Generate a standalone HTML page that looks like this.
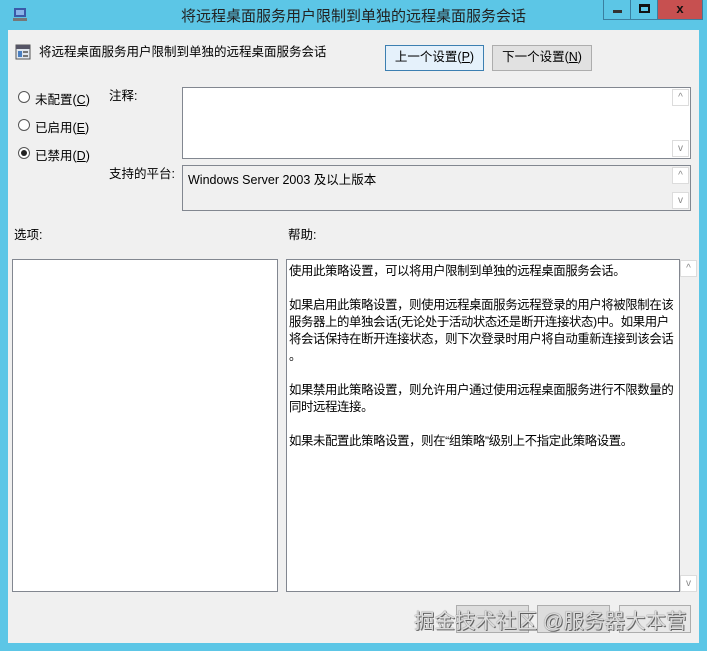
<!DOCTYPE html>
<html><head><meta charset="utf-8"><style>
*{margin:0;padding:0;box-sizing:border-box}
body{width:707px;height:651px;background:#5cc6e6;position:relative;overflow:hidden;font-family:"Liberation Sans","Noto Sans CJK SC",sans-serif;font-size:12.5px;color:#000}
.a{position:absolute}
.panel{left:8px;top:30px;width:691px;height:613px;background:#f0f0f0}
.btn{border:1px solid #adadad;background:#e1e1e1;text-align:center;line-height:23px;font-size:12.5px}
.box{border:1px solid #828790;background:#fff}
.sb{background:#fff;border:1px solid #dcdcdc;width:17px;height:17px;font-size:10px;color:#888;text-align:center;line-height:15px}
.radio{width:12px;height:12px;border:1px solid #555;border-radius:50%;background:#fff}
.help div{white-space:nowrap;height:17px}
</style></head><body>
<svg class="a" style="left:12px;top:6px" width="16" height="16"><rect x="2" y="2" width="12" height="9" fill="#3b5aa8"/><rect x="4" y="4" width="8" height="5" fill="#8ab4e8"/><rect x="1" y="12" width="14" height="3" fill="#777"/></svg>
<div class="a" style="left:0;top:5px;width:707px;text-align:center;font-size:15px;color:#222">将远程桌面服务用户限制到单独的远程桌面服务会话</div>
<div class="a" style="left:603px;top:0;width:28px;height:20px;border:1px solid #3a7fa0;border-top:none"><div class="a" style="left:9px;top:10px;width:9px;height:3px;background:#333"></div></div>
<div class="a" style="left:630px;top:0;width:28px;height:20px;border:1px solid #3a7fa0;border-top:none"><div class="a" style="left:8px;top:4px;width:11px;height:9px;border:2px solid #111;border-top-width:3px"></div></div>
<div class="a" style="left:657px;top:0;width:46px;height:20px;background:#c75050;border:1px solid #3a7fa0;border-top:none;color:#111;text-align:center;font-weight:bold;font-size:13px;line-height:18px">x</div>
<div class="a panel"></div>
<svg class="a" style="left:15px;top:44px" width="16" height="16"><rect x="1" y="1" width="14" height="14" fill="#dfe6ee" stroke="#555"/><rect x="1" y="1" width="14" height="4" fill="#556"/><rect x="3" y="7" width="4" height="6" fill="#4a7fc0"/><rect x="8" y="7" width="5" height="2" fill="#777"/><rect x="8" y="11" width="5" height="2" fill="#777"/></svg>
<div class="a" style="left:39px;top:41px">将远程桌面服务用户限制到单独的远程桌面服务会话</div>
<div class="a btn" style="left:385px;top:45px;width:99px;height:26px;border-color:#3c7fb1;background:#e5f1fb">上一个设置(<u>P</u>)</div>
<div class="a btn" style="left:492px;top:45px;width:100px;height:26px">下一个设置(<u>N</u>)</div>
<div class="a radio" style="left:18px;top:91px"></div><div class="a" style="left:35px;top:89px">未配置(<u>C</u>)</div>
<div class="a radio" style="left:18px;top:119px"></div><div class="a" style="left:35px;top:117px">已启用(<u>E</u>)</div>
<div class="a radio" style="left:18px;top:147px"><div class="a" style="left:2px;top:2px;width:6px;height:6px;border-radius:50%;background:#222"></div></div><div class="a" style="left:35px;top:145px">已禁用(<u>D</u>)</div>
<div class="a" style="left:109px;top:85px">注释:</div>
<div class="a box" style="left:182px;top:87px;width:509px;height:72px"><div class="a sb" style="right:1px;top:1px">^</div><div class="a sb" style="right:1px;bottom:1px">v</div></div>
<div class="a" style="left:109px;top:163px">支持的平台:</div>
<div class="a box" style="left:182px;top:165px;width:509px;height:46px;background:#f0f0f0"><div class="a" style="left:5px;top:3px">Windows Server 2003 及以上版本</div><div class="a sb" style="right:1px;top:1px">^</div><div class="a sb" style="right:1px;bottom:1px">v</div></div>
<div class="a" style="left:14px;top:224px">选项:</div>
<div class="a" style="left:288px;top:224px">帮助:</div>
<div class="a box" style="left:12px;top:259px;width:266px;height:333px"></div>
<div class="a box help" style="left:286px;top:259px;width:394px;height:333px;padding:1px 2px;font-size:12.4px;letter-spacing:-0.38px;overflow:hidden">
<div>使用此策略设置，可以将用户限制到单独的远程桌面服务会话。</div><div></div>
<div>如果启用此策略设置，则使用远程桌面服务远程登录的用户将被限制在该</div>
<div>服务器上的单独会话(无论处于活动状态还是断开连接状态)中。如果用户</div>
<div>将会话保持在断开连接状态，则下次登录时用户将自动重新连接到该会话</div>
<div>。</div><div></div>
<div>如果禁用此策略设置，则允许用户通过使用远程桌面服务进行不限数量的</div>
<div>同时远程连接。</div><div></div>
<div>如果未配置此策略设置，则在“组策略”级别上不指定此策略设置。</div>
</div>
<div class="a" style="left:680px;top:259px;width:17px;height:333px;background:#f0f0f0"><div class="a sb" style="left:0;top:1px">^</div><div class="a sb" style="left:0;bottom:0">v</div></div>
<div class="a btn" style="left:456px;top:605px;width:73px;height:28px;background:#ddd"></div>
<div class="a btn" style="left:537px;top:605px;width:73px;height:28px;background:#ddd"></div>
<div class="a btn" style="left:619px;top:605px;width:72px;height:28px;background:#e8e8e8"></div>
<div class="a" style="left:414px;top:604px;font-size:20.5px;color:#ddd;text-shadow:0 0 1px #555,1px 1px 0 #666">掘金技术社区 @服务器大本营</div>
</body></html>
